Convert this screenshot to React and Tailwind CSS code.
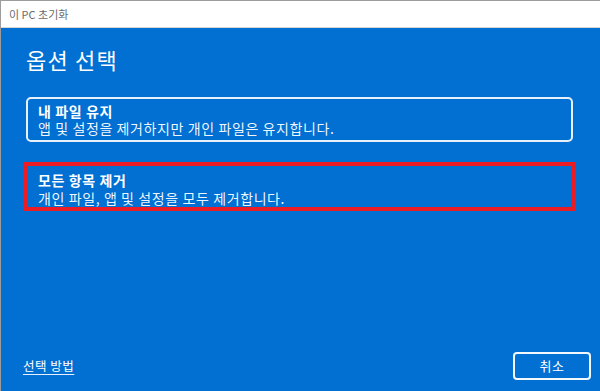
import React from 'react';

const font = { fontFamily: '"Noto Sans CJK KR", "Noto Sans", sans-serif' };

const OptionCard = ({ title, desc, selected }) => {
  if (selected) {
    return (
      <div className="-mx-[3px] h-[49px] border-4 border-[#ec1c24] pl-[11px] pt-[5px]">
        <div className="text-[14px] leading-[18px] tracking-[0.6px] font-bold text-white">{title}</div>
        <div className="text-[14px] leading-[18px] tracking-[0.6px] text-white/95">{desc}</div>
      </div>
    );
  }

  return (
    <div className="h-[45px] rounded-[5px] border-2 border-white/90 pl-[10px] flex flex-col justify-center">
      <div className="text-[14px] leading-[17px] tracking-[0.6px] font-bold text-white">{title}</div>
      <div className="text-[14px] leading-[17px] tracking-[0.6px] text-white/95">{desc}</div>
    </div>
  );
};

export default function App() {
  return (
    <div
      className="w-[600px] h-[391px] flex flex-col border-l border-t border-[#9c9c9c] bg-white overflow-hidden"
      style={font}
    >
      {/* title bar */}
      <div className="h-[27px] shrink-0 flex items-center pl-[8px] bg-white border-b border-[#d6d6d6]">
        <span className="text-[11px] text-[#6b6b6b]">이 PC 초기화</span>
      </div>

      {/* dialog body */}
      <div className="flex-1 flex flex-col bg-[#0170d2]">
        <div className="pl-[25px] pr-[27px] pt-[16px]">
          <h1 className="text-[22px] leading-[30px] tracking-[1.2px] font-normal text-white">옵션 선택</h1>

          <div className="mt-[23px] flex flex-col gap-[20px]">
            <OptionCard
              title="내 파일 유지"
              desc="앱 및 설정을 제거하지만 개인 파일은 유지합니다."
            />
            <OptionCard
              title="모든 항목 제거"
              desc="개인 파일, 앱 및 설정을 모두 제거합니다."
              selected
            />
          </div>
        </div>

        {/* footer */}
        <div className="mt-auto flex items-center justify-between pl-[22px] pr-[9px] pb-[11px]">
          <a className="text-[12.5px] leading-[16px] tracking-[0.5px] text-white underline underline-offset-[3px] decoration-white/90">
            선택 방법
          </a>
          <button className="w-[78px] h-[28px] rounded-[4px] border-2 border-white/95 text-[13px] tracking-[0.5px] text-white">
            취소
          </button>
        </div>
      </div>
    </div>
  );
}
